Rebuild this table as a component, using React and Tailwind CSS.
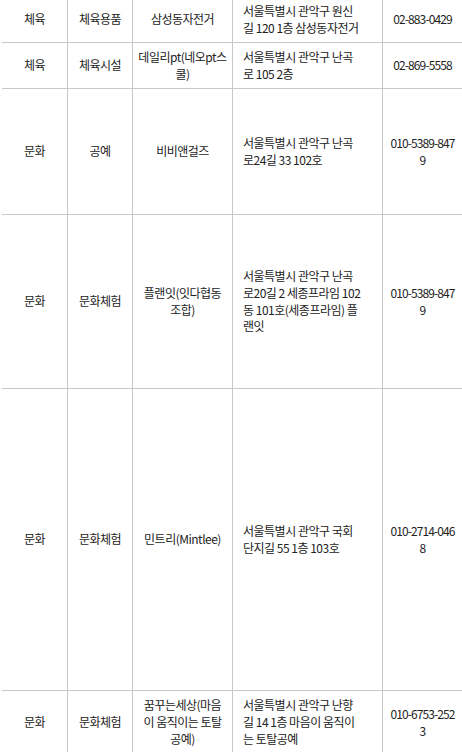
import React from 'react';

const rows = [
  {
    h: 'h-[46px]',
    cat: '체육',
    sub: '체육용품',
    name: ['삼성동자전거'],
    addr: ['서울특별시 관악구 원신', '길 120 1층 삼성동자전거'],
    tel: ['02-883-0429'],
  },
  {
    h: 'h-[46px]',
    cat: '체육',
    sub: '체육시설',
    name: ['데일리pt(네오pt스', '쿨)'],
    addr: ['서울특별시 관악구 난곡', '로 105 2층'],
    tel: ['02-869-5558'],
  },
  {
    h: 'h-[126px]',
    cat: '문화',
    sub: '공예',
    name: ['비비앤걸즈'],
    addr: ['서울특별시 관악구 난곡', '로24길 33 102호'],
    tel: ['010-5389-847', '9'],
  },
  {
    h: 'h-[174px]',
    cat: '문화',
    sub: '문화체험',
    name: ['플랜잇(잇다협동', '조합)'],
    addr: ['서울특별시 관악구 난곡', '로20길 2 세종프라임 102', '동 101호(세종프라임) 플', '랜잇'],
    tel: ['010-5389-847', '9'],
  },
  {
    h: 'h-[302px]',
    cat: '문화',
    sub: '문화체험',
    name: ['민트리(Mintlee)'],
    addr: ['서울특별시 관악구 국회', '단지길 55 1층 103호'],
    tel: ['010-2714-046', '8'],
  },
  {
    h: 'h-[64px]',
    cat: '문화',
    sub: '문화체험',
    name: ['꿈꾸는세상(마음', '이 움직이는 토탈', '공예)'],
    addr: ['서울특별시 관악구 난향', '길 14 1층 마음이 움직이', '는 토탈공예'],
    tel: ['010-6753-252', '3'],
  },
];

function Lines({ lines }) {
  return lines.map((l, i) => (
    <span key={i} className="block whitespace-nowrap">
      {l}
    </span>
  ));
}

export default function App() {
  return (
    <div
      className="w-[462px] h-[752px] overflow-hidden bg-white text-[#222] text-[12px] leading-[16.7px] tracking-[-0.5px]"
      style={{ fontFamily: '"Noto Sans CJK KR", "Noto Sans", sans-serif' }}
    >
      <div className="-mt-[3px] ml-[2px] w-[460px]">
        {rows.map((r, i) => (
          <div key={i} className={`flex border-b border-[#c8c8c8] ${r.h}`}>
            <div className="w-[66px] shrink-0 border-r border-[#c8c8c8] flex items-center justify-center text-center">
              {r.cat}
            </div>
            <div className="w-[65px] shrink-0 border-r border-[#c8c8c8] flex items-center justify-center text-center">
              {r.sub}
            </div>
            <div className="w-[100px] shrink-0 border-r border-[#c8c8c8] flex flex-col items-center justify-center text-center">
              <Lines lines={r.name} />
            </div>
            <div className="w-[150px] shrink-0 border-r border-[#c8c8c8] flex flex-col justify-center pl-[10px]">
              <Lines lines={r.addr} />
            </div>
            <div className="w-[79px] shrink-0 flex flex-col items-center justify-center text-center tracking-[-0.9px]">
              <Lines lines={r.tel} />
            </div>
          </div>
        ))}
      </div>
    </div>
  );
}
